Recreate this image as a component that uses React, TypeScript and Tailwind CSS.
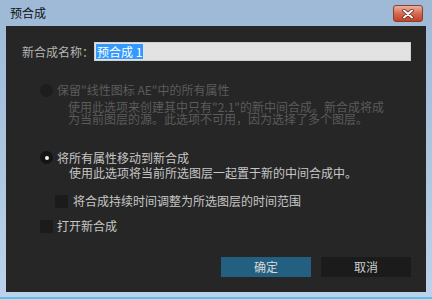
import React from 'react'

const font = { fontFamily: '"Noto Sans CJK SC", "Noto Sans", sans-serif' }

function Radio({ checked, disabled }: { checked?: boolean; disabled?: boolean }) {
  return (
    <span
      className={`flex h-[13px] w-[13px] shrink-0 items-center justify-center rounded-full ${
        disabled ? 'bg-[#1d1d1d]' : 'bg-[#141414]'
      }`}
    >
      {checked && <span className="h-[4px] w-[4px] rounded-full bg-[#f0f0f0]" />}
    </span>
  )
}

function Checkbox() {
  return <span className="h-[13px] w-[13px] shrink-0 bg-[#1b1b1b]" />
}

export default function App() {
  return (
    <div className="flex h-[299px] w-[432px] flex-col bg-gradient-to-b from-[#9db9d6] to-[#bcd3ea] text-[12px]" style={font}>
      {/* title bar */}
      <div className="flex h-[26px] items-start justify-between pl-[10px] pr-[9px]">
        <span className="mt-[5px] text-[12px] leading-[16px] text-[#111]">预合成</span>
        <button className="mt-[5px] flex h-[17px] w-[30px] items-center justify-center rounded-[3px] border border-[#8c3d2c] bg-gradient-to-b from-[#eab0a0] via-[#d66a50] to-[#c2412a]">
          <svg width="12" height="10" viewBox="0 0 12 10">
            <path d="M2 1.5 L10 8.5 M10 1.5 L2 8.5" stroke="#5a1f14" strokeWidth="3.4" strokeLinecap="round" />
            <path d="M2 1.5 L10 8.5 M10 1.5 L2 8.5" stroke="#fff" strokeWidth="2" strokeLinecap="round" />
          </svg>
        </button>
      </div>

      {/* dialog body */}
      <div className="mx-[6px] flex h-[266px] flex-col bg-[#262626] pl-[16px] pr-[15px] pt-[16px]">
        <div className="flex h-[19px] items-center">
          <span className="w-[72px] text-[#b4b4b4]">新合成名称：</span>
          <div className="flex h-[19px] flex-1 items-center border border-[#d0d0d0] bg-[#e3e3e3] pl-[1px]">
            <span className="bg-[#3399ff] px-[1px] leading-[15px] text-white">预合成 1</span>
          </div>
        </div>

        {/* option 1 (disabled) */}
        <div className="mt-[22px] flex items-start pl-[18px] text-[#5b5b5b]">
          <div className="mt-[1px]">
            <Radio disabled />
          </div>
          <div className="ml-[4px]">
            <div className="leading-[14px]">保留"线性图标 AE"中的所有属性</div>
            <p className="ml-[11px] mt-[4px] leading-[12px]">
              使用此选项来创建其中只有"2.1"的新中间合成。新合成将成
              <br />
              为当前图层的源。此选项不可用，因为选择了多个图层。
            </p>
          </div>
        </div>

        {/* option 2 */}
        <div className="mt-[25px] flex items-start pl-[18px] text-[#c6c6c6]">
          <div className="mt-[1px]">
            <Radio checked />
          </div>
          <p className="ml-[4px] pl-[12px] -indent-[12px] leading-[15px]">
            将所有属性移动到新合成
            <br />
            使用此选项将当前所选图层一起置于新的中间合成中。
          </p>
        </div>

        <div className="mt-[14px] flex items-center pl-[33px] text-[#c6c6c6]">
          <Checkbox />
          <span className="ml-[5px] leading-[14px]">将合成持续时间调整为所选图层的时间范围</span>
        </div>

        <div className="mt-[11px] flex items-center pl-[18px] text-[#c6c6c6]">
          <Checkbox />
          <span className="ml-[4px] leading-[14px]">打开新合成</span>
        </div>

        <div className="mt-[24px] flex justify-end gap-[10px]">
          <button className="h-[20px] w-[90px] bg-[#225f80] text-[#d8d8d8]">确定</button>
          <button className="h-[20px] w-[90px] bg-[#1b1b1b] text-[#cfcfcf]">取消</button>
        </div>
      </div>

      <div className="flex-1" />
      <div className="h-[2px] bg-[#4fc6f2]" />
    </div>
  )
}
